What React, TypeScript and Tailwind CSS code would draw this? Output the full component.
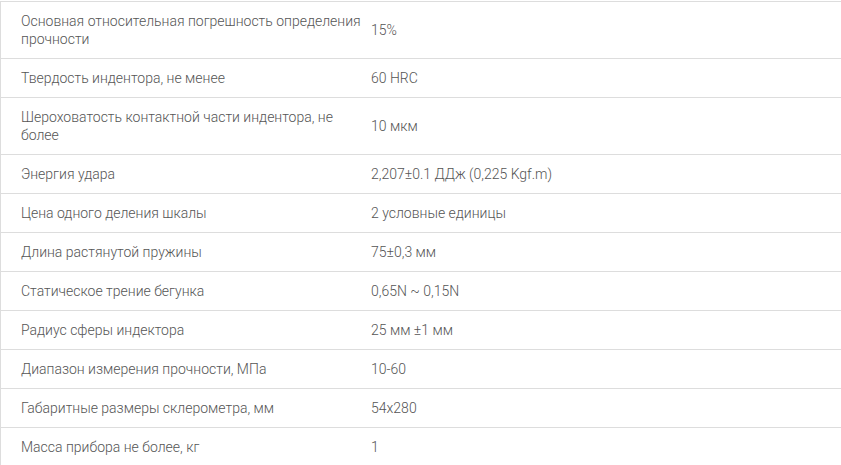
const rows: [string, string][] = [
  ["Основная относительная погрешность определения прочности", "15%"],
  ["Твердость индентора, не менее", "60 HRC"],
  ["Шероховатость контактной части индентора, не более", "10 мкм"],
  ["Энергия удара", "2,207±0.1 ДДж (0,225 Kgf.m)"],
  ["Цена одного деления шкалы", "2 условные единицы"],
  ["Длина растянутой пружины", "75±0,3 мм"],
  ["Статическое трение бегунка", "0,65N ~ 0,15N"],
  ["Радиус сферы индектора", "25 мм ±1 мм"],
  ["Диапазон измерения прочности, МПа", "10-60"],
  ["Габаритные размеры склерометра, мм", "54x280"],
  ["Масса прибора не более, кг", "1"],
];

export default function App() {
  return (
    <div className="min-h-screen bg-white pt-px font-['Roboto',sans-serif] text-[14px] font-light leading-[18px] text-[#555]">
      <div className="border-t border-l border-[#ddd]">
        {rows.map(([name, value]) => (
          <div key={name} className="grid grid-cols-[360px_1fr] border-b border-[#ddd]">
            <div className="py-[10px] pl-5">{name}</div>
            <div className="flex items-center py-[10px] pl-[10px]">{value}</div>
          </div>
        ))}
      </div>
    </div>
  );
}
